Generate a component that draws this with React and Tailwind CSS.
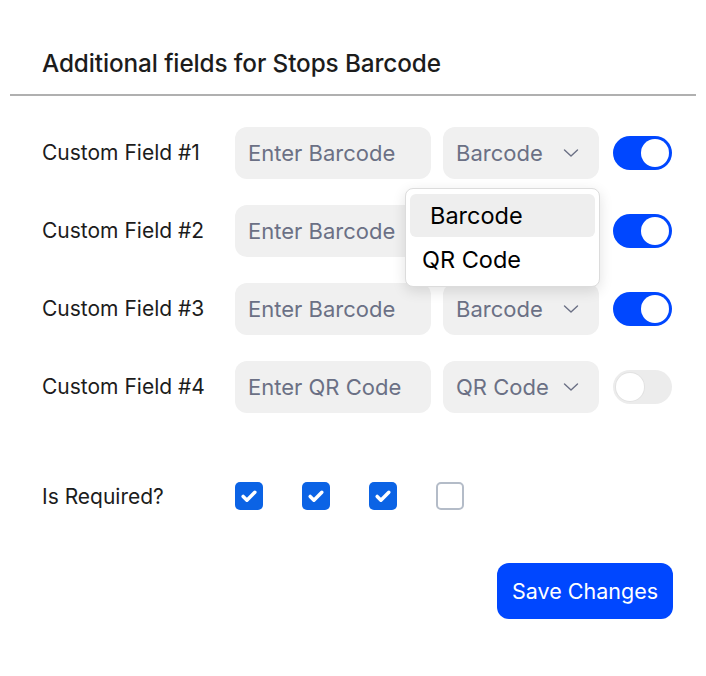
import React, { useState } from "react";

const FIELDS = [
  { id: 1, type: "Barcode", enabled: true, required: true },
  { id: 2, type: "Barcode", enabled: true, required: true },
  { id: 3, type: "Barcode", enabled: true, required: true },
  { id: 4, type: "QR Code", enabled: false, required: false },
];

const Chevron = () => (
  <svg width="20" height="20" viewBox="0 0 20 20" fill="none" stroke="#6b7085" strokeWidth="1.4" strokeLinecap="round" strokeLinejoin="round">
    <path d="M3.5 7l6.5 6 6.5-6" />
  </svg>
);

const Toggle = ({ on, onClick }) => (
  <button
    onClick={onClick}
    className={`w-[59px] h-[34px] rounded-full p-[3px] flex items-center transition ${
      on ? "bg-[#0047ff] justify-end" : "bg-[#ececec] justify-start"
    }`}
  >
    <span
      className={`block w-[28px] h-[28px] rounded-full bg-white ${
        on ? "" : "shadow-[0_0_0_1px_#e2e2e2]"
      }`}
    />
  </button>
);

const Checkbox = ({ checked, onClick }) => (
  <button
    onClick={onClick}
    className={`w-[28px] h-[28px] rounded-[5px] flex items-center justify-center ${
      checked ? "bg-[#0b63e5]" : "bg-white border-2 border-[#b4bcc8]"
    }`}
  >
    {checked && (
      <svg width="20" height="20" viewBox="0 0 24 24" fill="none" stroke="white" strokeWidth="4.2" strokeLinecap="round" strokeLinejoin="round">
        <path d="M5 12.5l4.5 4.5L19 7.5" />
      </svg>
    )}
  </button>
);

export default function App() {
  const [fields, setFields] = useState(FIELDS);
  const [openId, setOpenId] = useState(1);

  const update = (id, patch) =>
    setFields(fields.map((f) => (f.id === id ? { ...f, ...patch } : f)));

  return (
    <div className="w-[706px] h-[676px] bg-white px-[10px] font-['Inter',sans-serif] text-[#1c1c1c]">
      <div className="h-[96px] border-b-2 border-[#b0b0b0] flex items-center px-8 pt-[32px]">
        <h2 className="text-[24.3px] font-medium tracking-[-0.1px]">
          Additional fields for Stops Barcode
        </h2>
      </div>

      <div className="pl-8 pr-[23px] pt-[31px]">
        <div className="flex flex-col gap-[26px]">
          {fields.map((f) => (
            <div key={f.id} className="flex items-center">
              <span className="w-[193px] text-[21px]">Custom Field #{f.id}</span>
              <input
                placeholder={f.type === "Barcode" ? "Enter Barcode" : "Enter QR Code"}
                className="w-[196px] h-[52px] rounded-xl bg-[#f0f0f0] px-[13px] text-[22px] outline-none placeholder:text-[#6b7085]"
              />
              <div className="relative ml-3">
                <button
                  onClick={() => setOpenId(openId === f.id ? null : f.id)}
                  className="w-[156px] h-[52px] rounded-xl bg-[#f0f0f0] pl-[13px] pr-[18px] flex items-center justify-between text-[22px] text-[#6b7085]"
                >
                  {f.type}
                  <Chevron />
                </button>
                {openId === f.id && (
                  <div className="absolute z-10 left-[-38px] top-[61px] w-[195px] bg-white border border-[#dcdcdc] rounded-lg shadow-[0_4px_14px_rgba(0,0,0,0.12)] p-[4px] pt-[5px] text-[23.5px] text-black">
                    <button
                      onClick={() => { update(f.id, { type: "Barcode" }); setOpenId(null); }}
                      className="w-full h-[43px] rounded-md bg-[#eeeeee] text-left pl-[20px]"
                    >
                      Barcode
                    </button>
                    <button
                      onClick={() => { update(f.id, { type: "QR Code" }); setOpenId(null); }}
                      className="w-full h-[45px] text-left pl-[12px]"
                    >
                      QR Code
                    </button>
                  </div>
                )}
              </div>
              <div className="ml-[14px]">
                <Toggle on={f.enabled} onClick={() => update(f.id, { enabled: !f.enabled })} />
              </div>
            </div>
          ))}
        </div>

        <div className="flex items-center h-[28px] mt-[69px]">
          <span className="w-[193px] text-[21px] leading-none">Is Required?</span>
          <div className="flex gap-[39px]">
            {fields.map((f) => (
              <Checkbox key={f.id} checked={f.required} onClick={() => update(f.id, { required: !f.required })} />
            ))}
          </div>
        </div>

        <div className="flex justify-end mt-[53px]">
          <button className="w-[176px] h-[56px] rounded-xl bg-[#0047ff] text-white text-[21.5px]">
            Save Changes
          </button>
        </div>
      </div>
    </div>
  );
}
